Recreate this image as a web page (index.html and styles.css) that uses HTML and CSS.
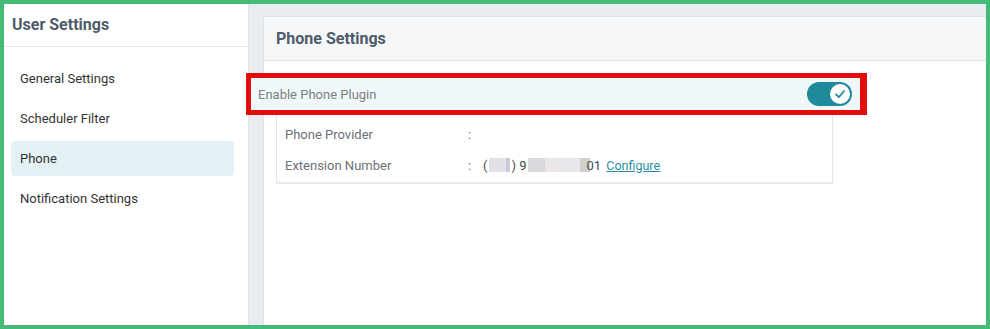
FILE: index.html
```html
<!DOCTYPE html>
<html lang="en">
<head>
  <meta charset="UTF-8" />
  <title>User Settings</title>
  <link rel="stylesheet" href="styles.css">
</head>
<body>
  <div class="frame">
    <aside class="sidebar">
      <div class="sidebar-title">User Settings</div>
      <nav class="menu">
        <div class="menu-item">General Settings</div>
        <div class="menu-item">Scheduler Filter</div>
        <div class="menu-item active">Phone</div>
        <div class="menu-item">Notification Settings</div>
      </nav>
    </aside>
    <main class="main">
      <section class="panel">
        <div class="panel-header">Phone Settings</div>
        <div class="panel-body">
          <div class="plugin-row">
            <span class="plugin-label">Enable Phone Plugin</span>
            <span class="toggle">
              <span class="knob">
                <svg width="14" height="14" viewBox="0 0 14 14"><path d="M3 7.4 L5.9 10.2 L11 4" fill="none" stroke="#1f8a9b" stroke-width="1.8" stroke-linecap="round" stroke-linejoin="round"/></svg>
              </span>
            </span>
          </div>
          <div class="details">
            <div class="detail-row">
              <span class="detail-label">Phone Provider</span>
              <span class="colon">:</span>
              <span class="detail-value"></span>
            </div>
            <div class="detail-row">
              <span class="detail-label">Extension Number</span>
              <span class="colon">:</span>
              <span class="detail-value">(<span class="mask mask-a"></span>) 9<span class="mask mask-b"></span>01 <a class="link" href="#">Configure</a></span>
            </div>
          </div>
        </div>
      </section>
    </main>
  </div>
</body>
</html>
```

FILE: styles.css
```css
html, body {
  margin: 0;
  padding: 0;
}
body {
  font-family: Roboto, "Liberation Sans", sans-serif;
  background: #ffffff;
}
.frame {
  width: 990px;
  height: 329px;
  box-sizing: border-box;
  border: 4px solid #46bb78;
  display: flex;
  overflow: hidden;
}
.sidebar {
  width: 244px;
  flex: none;
  background: #ffffff;
  border-right: 1px solid #dfe3ea;
}
.sidebar-title {
  height: 43px;
  box-sizing: border-box;
  padding: 11px 0 0 8px;
  font-size: 16px;
  font-weight: bold;
  color: #4f5b6b;
  border-bottom: 1px solid #e2e6ec;
}
.menu {
  padding: 14px 0 0 7px;
  display: flex;
  flex-direction: column;
  gap: 5px;
}
.menu-item {
  width: 223px;
  height: 35px;
  box-sizing: border-box;
  padding-left: 9px;
  display: flex;
  align-items: center;
  font-size: 13px;
  color: #333333;
  border-radius: 4px;
}
.menu-item.active {
  background: #e3f1f5;
}
.main {
  flex: 1;
  background: #e9edf1;
  padding: 12px 0 0 14px;
  display: flex;
}
.panel {
  flex: 1;
  background: #ffffff;
  border: 1px solid #dde2e8;
  border-right: none;
  border-bottom: none;
  border-radius: 4px 0 0 0;
}
.panel-header {
  height: 44px;
  box-sizing: border-box;
  padding: 12px 0 0 12px;
  background: #f5f7f9;
  border-bottom: 1px solid #dde2e8;
  font-size: 16px;
  font-weight: bold;
  color: #4f5b6b;
}
.panel-body {
  padding-top: 12px;
}
.plugin-row {
  margin-left: -18px;
  width: 621px;
  height: 42px;
  box-sizing: border-box;
  border: 5px solid #e30b0b;
  border-right-width: 7px;
  background: #f0f7f9;
  display: flex;
  align-items: center;
  justify-content: space-between;
  padding: 0 8px 0 7px;
}
.plugin-label {
  font-size: 13px;
  color: #7a7f86;
}
.toggle {
  width: 45px;
  height: 24px;
  border-radius: 12px;
  background: #1f8a9b;
  display: flex;
  align-items: center;
  justify-content: flex-end;
  padding-right: 2px;
  box-sizing: border-box;
}
.knob {
  width: 20px;
  height: 20px;
  border-radius: 50%;
  background: #ffffff;
  display: flex;
  align-items: center;
  justify-content: center;
}
.details {
  margin-left: 12px;
  width: 557px;
  height: 69px;
  box-sizing: border-box;
  border: 1px solid #e3e7eb;
  border-top: none;
  border-bottom: 2px solid #e6eaee;
  padding: 10px 0 0 8px;
  display: flex;
  flex-direction: column;
  gap: 13px;
}
.detail-row {
  display: flex;
  align-items: center;
  font-size: 13px;
  height: 18px;
  color: #6b7078;
}
.detail-label {
  width: 183px;
}
.colon {
  width: 15px;
}
.detail-value {
  color: #444a52;
  display: flex;
  align-items: center;
  white-space: pre;
}
.mask {
  display: inline-block;
  height: 14px;
  background: #dcdde1;
}
.mask-a {
  width: 21px;
  margin: 0 1px 0 2px;
  background: linear-gradient(to right, #e0e1e6 0 17px, #c9cbd9 17px);
}
.mask-b {
  width: 62px;
  margin-left: 1px;
  margin-right: -3px;
  background: linear-gradient(to right, #d8d9dc 0 17px, #ece6e6 17px 33px, #e5e7ea 33px 52px, #cfd0cd 52px);
}
.link {
  color: #2a8ea3;
  text-decoration: underline;
  font-size: 12.5px;
  margin-left: 2px;
}
```
